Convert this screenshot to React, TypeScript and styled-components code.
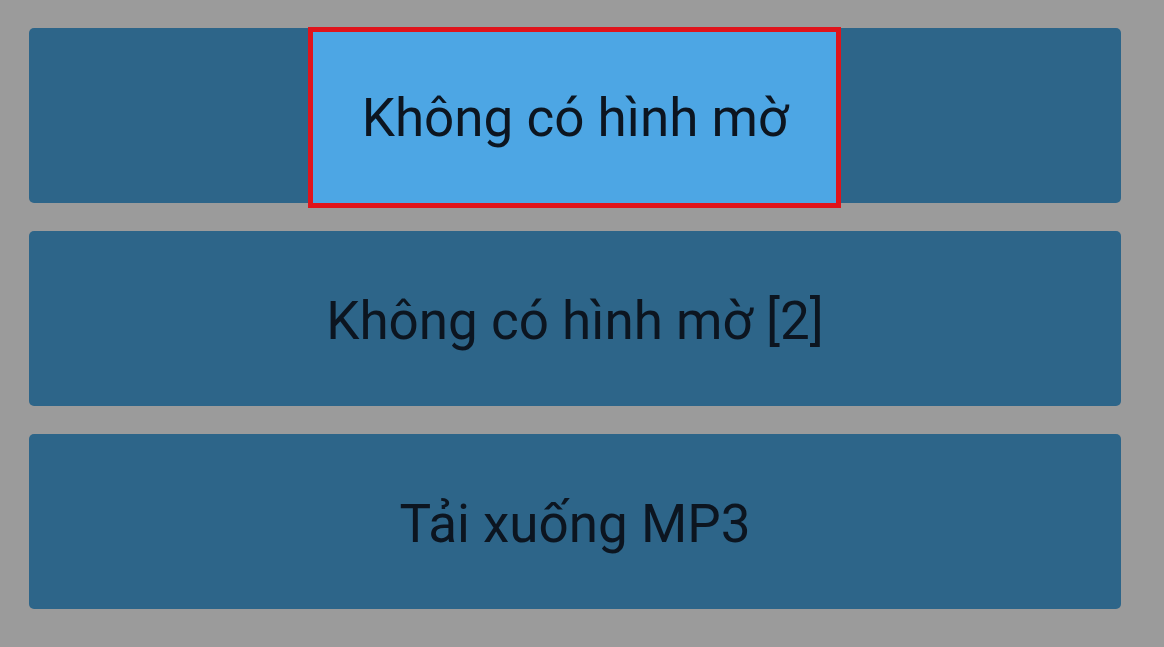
import React from "react";
import styled, { createGlobalStyle } from "styled-components";

const GlobalStyle = createGlobalStyle`
    html, body {
        margin: 0;
        padding: 0;
        background: #9b9b9b;
    }
`;

const Page = styled.div`
    width: 1164px;
    height: 647px;
    box-sizing: border-box;
    padding: 28px 43px 37px 29px;
    display: flex;
    flex-direction: column;
    gap: 28px;
    background: #9b9b9b;
    font-family: Roboto, "Noto Sans", sans-serif;
`;

const OptionButton = styled.div`
    position: relative;
    height: 175px;
    border-radius: 5px;
    background: #2d6589;
    display: flex;
    align-items: center;
    justify-content: center;
    color: #0c1520;
    font-size: 53px;
    line-height: 1;
    padding-top: 6px;
    box-sizing: border-box;
`;

const Label = styled.span`
    position: relative;
    z-index: 1;
`;

/* selected option: light fill framed in red, a bit taller than the row */
const Highlight = styled.div`
    position: absolute;
    left: 279px;
    top: -1px;
    width: 533px;
    height: 181px;
    box-sizing: border-box;
    border: 5px solid #e0141b;
    background: #4da6e4;
`;

const options = [
    { label: "Không có hình mờ", selected: true },
    { label: "Không có hình mờ [2]", selected: false },
    { label: "Tải xuống MP3", selected: false },
];

export default function App() {
    return (
        <>
            <GlobalStyle />
            <Page>
                {options.map((o) => (
                    <OptionButton key={o.label}>
                        {o.selected && <Highlight />}
                        <Label>{o.label}</Label>
                    </OptionButton>
                ))}
            </Page>
        </>
    );
}
